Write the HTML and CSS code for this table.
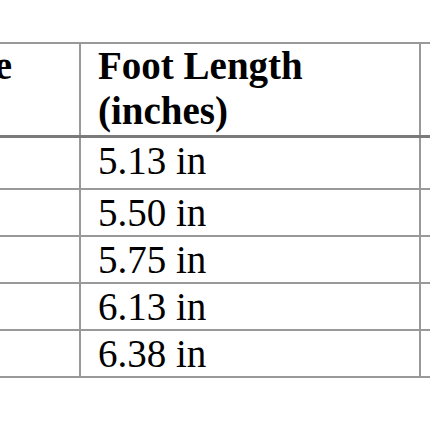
FILE: index.html
```html
<!DOCTYPE html>
<html>
<head>
<meta charset="utf-8">
<link rel="stylesheet" href="styles.css">
</head>
<body>
<table class="size-table">
  <colgroup>
    <col class="col-size">
    <col class="col-length">
    <col class="col-extra">
  </colgroup>
  <thead>
    <tr>
      <th>Size</th>
      <th>Foot Length (inches)</th>
      <th>Age</th>
    </tr>
  </thead>
  <tbody>
    <tr><td>1</td><td>5.13 in</td><td>0</td></tr>
    <tr><td>2</td><td>5.50 in</td><td>3</td></tr>
    <tr><td>3</td><td>5.75 in</td><td>6</td></tr>
    <tr><td>4</td><td>6.13 in</td><td>9</td></tr>
    <tr><td>5</td><td>6.38 in</td><td>12</td></tr>
  </tbody>
</table>
</body>
</html>
```
FILE: styles.css
```css
html, body {
  margin: 0;
  padding: 0;
  background: #ffffff;
  overflow: hidden;
}

.size-table {
  margin-top: 42px;
  margin-left: -74px;
  border-collapse: collapse;
  table-layout: fixed;
  width: 618px;
  font-family: "Liberation Serif", "Times New Roman", serif;
  font-size: 39px;
  color: #000;
}

.col-size { width: 153px; }
.col-length { width: 340px; }
.col-extra { width: 125px; }

.size-table th,
.size-table td {
  border: 2px solid #999999;
  padding: 0 17px;
  text-align: left;
  vertical-align: top;
  line-height: 45px;
  white-space: nowrap;
  overflow: hidden;
}

.size-table th {
  font-weight: bold;
  line-height: 1.15;
  border-bottom: 3px solid #7a7a7a;
  padding-bottom: 1px;
}

.size-table th:nth-child(2) {
  white-space: normal;
}

.size-table tbody tr:first-child td {
  padding-bottom: 5px;
}
```
